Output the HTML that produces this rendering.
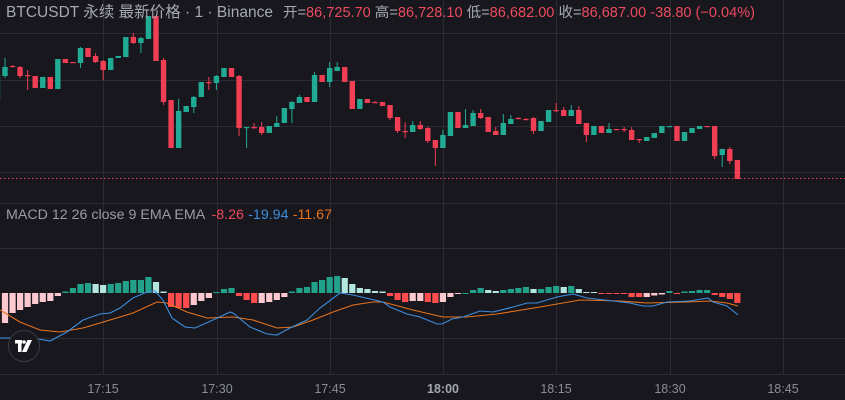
<!DOCTYPE html>
<html><head><meta charset="utf-8"><style>
html,body{margin:0;padding:0;background:#17171d;width:845px;height:400px;overflow:hidden}
svg{display:block}
text{font-family:"Liberation Sans","Noto Sans CJK SC",sans-serif}
</style></head><body>
<svg id="s" width="845" height="400" xmlns="http://www.w3.org/2000/svg">
<rect width="845" height="400" fill="#17171d"/>
<g id="grid" stroke="#2a2b33" stroke-width="1"></g>
<line x1="0" y1="178.5" x2="845" y2="178.5" stroke="#e0455a" stroke-width="1" stroke-dasharray="1.5,2.5"/>
<g id="candles"></g>
<g id="hist"></g>
<polyline id="sig" fill="none" stroke="#e8731c" stroke-width="1.1"/>
<polyline id="mac" fill="none" stroke="#3d8ede" stroke-width="1.1"/>
<text x="6" y="17" font-size="15.5" fill="#a6a9b2" textLength="267" lengthAdjust="spacingAndGlyphs">BTCUSDT 永续 最新价格 · 1 · Binance</text>
<text x="283" y="17" font-size="14.3" fill="#a6a9b2" textLength="472" lengthAdjust="spacingAndGlyphs">开=<tspan fill="#ec4a5e">86,725.70</tspan> 高=<tspan fill="#ec4a5e">86,728.10</tspan> 低=<tspan fill="#ec4a5e">86,682.00</tspan> 收=<tspan fill="#ec4a5e">86,687.00</tspan> <tspan fill="#ec4a5e">-38.80 (−0.04%)</tspan></text>
<text x="6" y="219" font-size="13.5" fill="#9a9da6" textLength="326" lengthAdjust="spacingAndGlyphs">MACD 12 26 close 9 EMA EMA <tspan fill="#ef4a5b" dx="3">-8.26</tspan><tspan fill="#3d8ede" dx="4">-19.94</tspan><tspan fill="#e8731c" dx="4">-11.67</tspan></text>
<g font-size="12.5" fill="#8a8d96" text-anchor="middle">
<text x="103" y="393">17:15</text><text x="217" y="393">17:30</text><text x="330" y="393">17:45</text>
<text x="443" y="393" font-weight="bold" fill="#a3a6ae">18:00</text><text x="556" y="393">18:15</text><text x="670" y="393">18:30</text><text x="783" y="393">18:45</text>
</g>
<circle cx="24" cy="346" r="15.5" fill="#17171d" stroke="#3a3b42" stroke-width="1"/>
<g fill="#fff"><rect x="15" y="340" width="7" height="3.5"/><rect x="18" y="340" width="3.5" height="12"/><circle cx="24" cy="342" r="1.8"/><polygon points="27.5,340 32,340 26.5,352 22,352"/></g>
</svg>
<script>
var ns="http://www.w3.org/2000/svg";
function el(p,t,a){var e=document.createElementNS(ns,t);for(var k in a)e.setAttribute(k,a[k]);p.appendChild(e);return e;}
var g=document.getElementById('grid');
[33,80,126,172,203,248,338,374].forEach(function(y){el(g,'line',{x1:0,x2:845,y1:y+.5,y2:y+.5});});
[103,217,330,443,556,670,783].forEach(function(x){el(g,'line',{x1:x+.5,x2:x+.5,y1:0,y2:374});});
var G="#22ab94",R="#f03e54";
var C=[[-1,100,75],[0,76,67,58,78],[1,66,66.5,65,67],[2,67,76,66,78],[3,75,75.5,70,90],[4,76,88],[5,88,77],[6,77,89],[7,89,59],[8,59,63],[9,62,62.5],[10,63,48,47,68],[11,48,57],[12,56,62,53,63],[13,61,70,60,80],[14,70,58],[15,58,56],[16,57,37],[17,37,43,33,44],[18,43,38,37,53],[19,39,16],[20,16,61],[21,60,102,58,105],[22,100,148],[23,148,111,99,148],[24,112,106],[25,107,97,96,113],[26,97,82],[27,82,82.5,77,90],[28,83,76,75,90],[29,77,68],[30,68,77],[31,76,128,75,136],[32,127.5,127,127,148],[33,127,127.5,123,129],[34,127,133,122,135],[35,133,126],[36,127,123,116,127],[37,123,108],[38,109,102,101,123],[39,103,97,95,103],[40,97,102],[41,102,75,72,102],[42,75,82],[43,82,68,62,87],[44,71,67,62,71],[45,67,82],[46,81,109],[47,109,99],[48,99,103],[49,102,102.5,101,103],[50,102,106],[51,105,118,105,120],[52,117,131,117,133],[53,131,131.5,122,138],[54,132,125,121,132],[55,125,129,121,130],[56,128,141,127,143],[57,140,148,140,166],[58,148,135,130,148],[59,136,112],[60,112,128],[61,128,125,109,128],[62,126,113,110,126],[63,113,118,109,119],[64,117,132],[65,131,135,127,135],[66,135,123,114,135],[67,124,119,115,124],[68,118,118.5,117,119],[69,119,119.5,118,120],[70,118,131,117,134],[71,131,121],[72,122,110],[73,110,110.5,103,112],[74,110,116,107,116],[75,116,110,105,116],[76,110,124,106,124],[77,123,135,123,142],[78,135,126],[79,126,133],[80,133,129,123,133],[81,129,129.5],[82,129,129.5,127,132],[83,130,140,127,140],[84,139,139.5,139,143],[85,141,137],[86,138,133],[87,133,126],[88,126.5,126],[89,126,141],[90,141,132],[91,133,128],[92,129,126],[93,126,126.5],[94,126,156,126,159],[95,155,149,149,167],[96,149,161,147,164],[97,160,179]];
var cg=document.getElementById('candles');
function X(i){return 5+7.55*i;}
C.forEach(function(c){var x=X(c[0]),o=c[1],cl=c[2],col=cl<=o?G:R;if(c[0]==53||c[0]==82||c[0]==3||c[0]==73||c[0]==84)col=R;
var top=Math.min(o,cl),bot=Math.max(o,cl),h=c[3]!==undefined?c[3]:top,l=c[4]!==undefined?c[4]:bot;
el(cg,'line',{x1:x,x2:x,y1:h,y2:l,stroke:col,'stroke-width':1});
el(cg,'rect',{x:x-2.7,y:top,width:5.4,height:Math.max(1.2,bot-top),fill:col});});
var Z=293;
var H="0p323 1p313 2p310 3p307 4p304 5p302 6p301 7p296 8d291.5 9d288 10d284 11d283 12l284 13l285 14d284 15d283 16d281 17d280 18d280 19d277 20l282 21l291.5 22r307 23r308 24r308 25p305 26p301 27p298 28d292 29d289 30d288 31r296 32r300 33r303 34p303 35p302 36p300 37p297 38d291.5 39d288 40d287 41d282 42d280 43d277 44d276 45l278 46l284 47l288 48l289 49l291 50l291.5 51r296 52r300 53r302 54p301 55p301 56r302 57r303 58p302 59p297 60p294 61d293.8 62d290 63d288 64l290 65l291 66d290 67d289 68d288 69d287 70l289 71d289 72d287 73d286 74l287 75d286 76l289 77l292 78l292 79r294 80r294 81r294 82r294 83r297 84r297 85p297 86p295.5 87p294.5 88d291 89r294 90d291.5 91d291 92d290 93d290 94r295 95r297 96r299 97r303".split(' ');
var hg=document.getElementById('hist');
var cols={d:"#22a28b",l:"#b2e6de",r:"#ff4d4d",p:"#fdc9cf"};
H.forEach(function(s){var m=s.match(/(-?\d+)([dlrp])([\d.]+)/);var i=+m[1],t=m[2],v=+m[3];var x=X(i);
var y=Math.min(v,Z),h=Math.max(1,Math.abs(v-Z));el(hg,'rect',{x:x-3.1,y:y,width:6.2,height:h,fill:cols[t]});});
var M="0,338 33,338 50,341 67,332 83,320 100,314 110,313 120,308 133,298 147,292 155,291 163,300 172,318 185,327 195,328 213,320 230,312 233,313 250,327 267,334 277,335 290,328 307,320 320,308 340,293 353,295 383,302 390,307 407,314 420,317 437,324 442,324 452,319 463,317 480,311 493,312 513,307 527,303 537,303 557,297 573,294 587,298 613,301 630,303 643,306 653,306 667,302 690,301 708,298 713,302 727,306 738,315";
var S="0,310 20,322 40,330 60,332 83,328 100,323 133,313 157,302 167,303 187,312 207,318 233,317 253,320 277,328 293,327 313,320 333,312 353,305 373,302 383,302 413,310 443,317 467,317 497,314 540,307 580,300 620,301 647,303 687,302 710,301 727,303 738,306";
document.getElementById('mac').setAttribute('points',M);
document.getElementById('sig').setAttribute('points',S);
</script>
</body></html>
